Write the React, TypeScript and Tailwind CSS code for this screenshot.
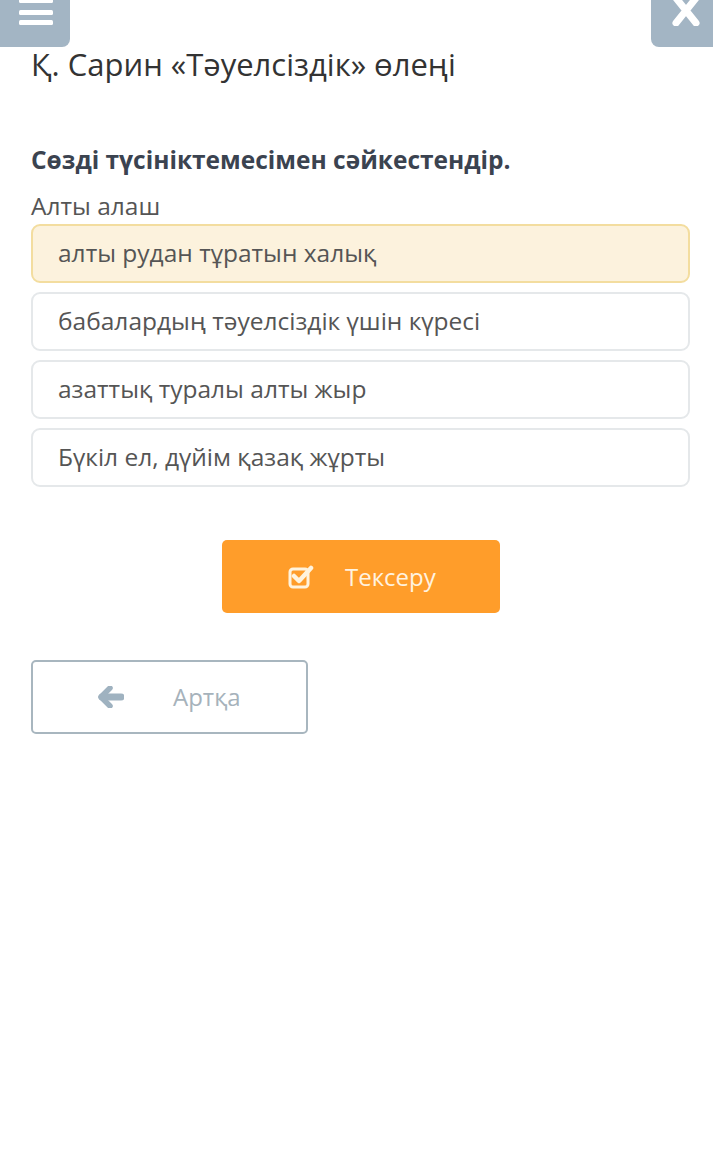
import React from "react";

const options = [
  { text: "алты рудан тұратын халық", active: true },
  { text: "бабалардың тәуелсіздік үшін күресі", active: false },
  { text: "азаттық туралы алты жыр", active: false },
  { text: "Бүкіл ел, дүйім қазақ жұрты", active: false },
];

const App = () => {
  return (
    <div
      className="w-[713px] min-h-[1175px] bg-white"
      style={{ fontFamily: '"Open Sans", "Noto Sans", sans-serif' }}
    >
      <div className="flex justify-between h-[47px]">
        <div className="w-[70px] h-[47px] bg-[#a3b5c4] rounded-br-[8px] flex justify-center pl-[2px]">
          <svg width="34" height="26" viewBox="0 0 34 26">
            <rect x="0" y="-2" width="34" height="5" rx="1.5" fill="white" />
            <rect x="0" y="10" width="34" height="5" rx="1.5" fill="white" />
            <rect x="0" y="20" width="34" height="5" rx="1.5" fill="white" />
          </svg>
        </div>
        <div className="w-[62px] h-[47px] bg-[#a3b5c4] rounded-bl-[8px] flex justify-center pl-[8px]">
          <svg width="28" height="26" viewBox="0 0 28 26">
            <path d="M4 -2 L24 23 M24 -2 L4 23" stroke="white" strokeWidth="7" strokeLinecap="round" />
          </svg>
        </div>
      </div>

      <div className="px-[31px]">
        <h1 className="-mt-[3px] text-[31px] leading-[40px] text-[#333] font-normal">
          Қ. Сарин «Тәуелсіздік» өлеңі
        </h1>

        <p className="mt-[60px] text-[24.5px] leading-[32px] font-bold text-[#3b4350]">
          Сөзді түсініктемесімен сәйкестендір.
        </p>
        <p className="mt-[14px] text-[24.5px] leading-[32px] text-[#555]">Алты алаш</p>

        <div className="mt-[2px] flex flex-col gap-[9px] w-[659px]">
          {options.map((o) => (
            <div
              key={o.text}
              className={
                o.active
                  ? "h-[59px] rounded-[9px] border-2 border-[#f3dd9f] bg-[#fcf2dd] flex items-center px-[25px] text-[24.5px] text-[#555]"
                  : "h-[59px] rounded-[9px] border-2 border-[#e5e8ea] bg-white flex items-center px-[25px] text-[24.5px] text-[#555]"
              }
            >
              {o.text}
            </div>
          ))}
        </div>

        <div className="mt-[53px] flex justify-center pl-[9px]">
          <button className="w-[278px] h-[73px] rounded-[5px] bg-[#ff9d2a] flex items-center text-white text-[24px]">
            <span className="ml-[66px] w-[26px] h-[26px] flex items-center">
              <svg width="26" height="24" viewBox="0 0 26 24">
                <rect x="2" y="4" width="18" height="18" rx="3" fill="none" stroke="#fff3dd" strokeWidth="3" />
                <path d="M6 11 L11 16 L23 3" fill="none" stroke="#fff3dd" strokeWidth="4.5" strokeLinecap="round" strokeLinejoin="round" />
              </svg>
            </span>
            <span className="ml-[31px] text-[#fff3e0]">Тексеру</span>
          </button>
        </div>

        <div className="mt-[47px]">
          <button className="w-[277px] h-[74px] rounded-[5px] border-2 border-[#a8b6bf] bg-white flex items-center text-[24px] text-[#a6b2bb]">
            <span className="ml-[65px] flex items-center">
              <svg width="26" height="22" viewBox="0 0 26 22">
                <path d="M12 2 L3 11 L12 20" fill="none" stroke="#9fb2c0" strokeWidth="5.5" strokeLinecap="round" strokeLinejoin="round" />
                <path d="M4 11 L23 11" stroke="#9fb2c0" strokeWidth="7" strokeLinecap="round" />
              </svg>
            </span>
            <span className="ml-[49px]">Артқа</span>
          </button>
        </div>
      </div>
    </div>
  );
};

export default App;
